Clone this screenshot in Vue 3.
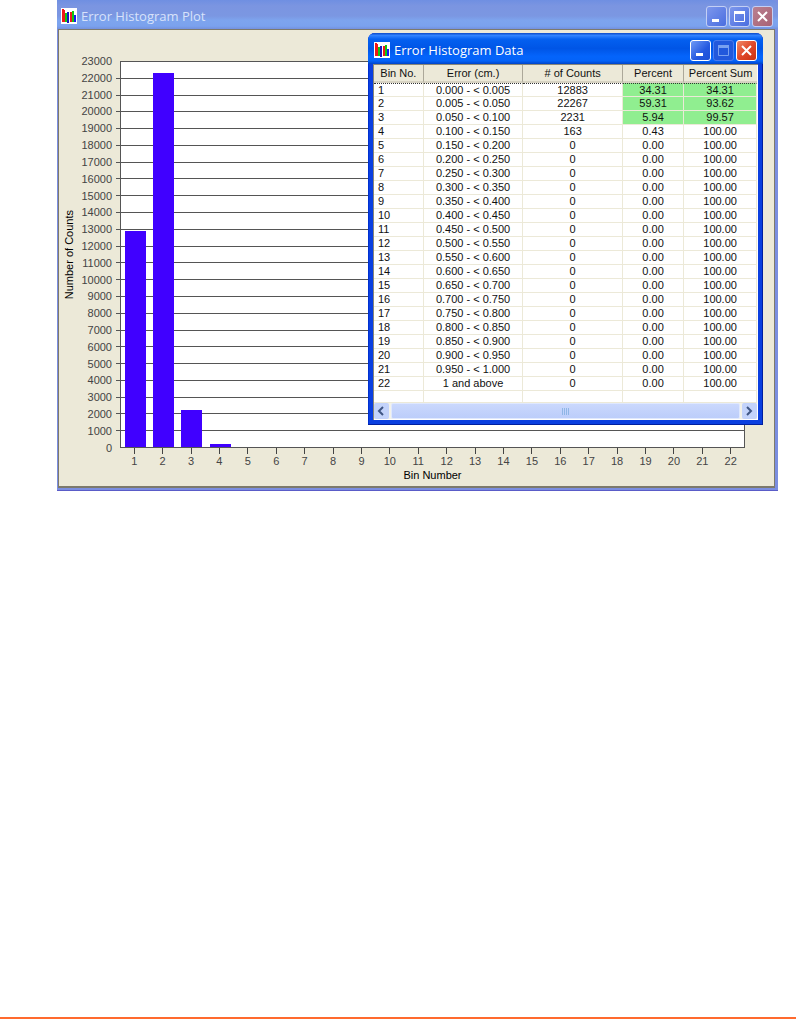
<script setup>
const step = 1000
const maxCount = 23000
const yLabels = Array.from({ length: 24 }, (_, i) => maxCount - i * step)
const ranges = [
  '0.000 - < 0.005', '0.005 - < 0.050', '0.050 - < 0.100', '0.100 - < 0.150',
  '0.150 - < 0.200', '0.200 - < 0.250', '0.250 - < 0.300', '0.300 - < 0.350',
  '0.350 - < 0.400', '0.400 - < 0.450', '0.450 - < 0.500', '0.500 - < 0.550',
  '0.550 - < 0.600', '0.600 - < 0.650', '0.650 - < 0.700', '0.700 - < 0.750',
  '0.750 - < 0.800', '0.800 - < 0.850', '0.850 - < 0.900', '0.900 - < 0.950',
  '0.950 - < 1.000', '1 and above',
]
const counts = [12883, 22267, 2231, 163]
const percents = ['34.31', '59.31', '5.94', '0.43']
const sums = ['34.31', '93.62', '99.57']
const rows = ranges.map((range, i) => ({
  bin: i + 1,
  range,
  count: counts[i] ?? 0,
  percent: percents[i] ?? '0.00',
  sum: sums[i] ?? '100.00',
  good: i < 3,
}))
const barHeight = (count) => ({ height: (count / maxCount) * 100 + '%' })
</script>

<template>
  <div class="page">
    <main class="desk">
      <section class="window plot-window" aria-label="Error Histogram Plot">
        <header class="titlebar">
          <svg class="app-icon" viewBox="0 0 16 16" aria-hidden="true">
            <rect width="16" height="16" fill="#fff" />
            <path d="M1 1h2v13H1zM3 2h1v12H3z" fill="#f01818" />
            <path d="M4 5h2v9H4z" fill="#10c810" />
            <path d="M6 4h2v11H6z" fill="#1818c0" />
            <path d="M9 4h2v10H9z" fill="#f01818" />
            <path d="M11 3h2v11h-2z" fill="#10c810" />
            <path d="M13 7h2v7h-2z" fill="#1818f0" />
          </svg>
          <h1>Error Histogram Plot</h1>
          <div class="controls">
            <button type="button" aria-label="Minimize"><svg viewBox="0 0 19 19"><path d="M5 13.5h7" stroke="#fff" stroke-width="3" /></svg></button>
            <button type="button" aria-label="Maximize"><svg viewBox="0 0 19 19"><path d="M4.5 5v9.500h10V4.500" fill="none" stroke="#fff" /><path d="M4 5.500h11" stroke="#fff" stroke-width="3" /></svg></button>
            <button type="button" class="close" aria-label="Close"><svg viewBox="0 0 19 19"><path d="M5 5l9 9M14 5l-9 9" stroke="#fff" stroke-width="2" /></svg></button>
          </div>
        </header>
        <div class="plot-body">
          <div class="y-title"><span>Number of Counts</span></div>
          <div class="y-axis">
            <span v-for="y in yLabels" :key="y">{{ y }}</span>
          </div>
          <div class="plot">
            <div class="grid"><i v-for="n in 23" :key="n"></i></div>
            <div class="bars">
              <div v-for="r in rows" :key="r.bin" class="slot">
                <div v-if="r.count" class="bar" :style="barHeight(r.count)"></div>
              </div>
            </div>
          </div>
          <div class="x-axis">
            <span v-for="r in rows" :key="r.bin">{{ r.bin }}</span>
          </div>
          <div class="x-title">Bin Number</div>
        </div>
      </section>

      <section class="window data-window" aria-label="Error Histogram Data">
        <header class="titlebar">
          <svg class="app-icon" viewBox="0 0 16 16" aria-hidden="true">
            <rect width="16" height="16" fill="#fff" />
            <path d="M1 1h2v13H1zM3 2h1v12H3z" fill="#f01818" />
            <path d="M4 5h2v9H4z" fill="#10c810" />
            <path d="M6 4h2v11H6z" fill="#1818c0" />
            <path d="M9 4h2v10H9z" fill="#f01818" />
            <path d="M11 3h2v11h-2z" fill="#10c810" />
            <path d="M13 7h2v7h-2z" fill="#1818f0" />
          </svg>
          <h2>Error Histogram Data</h2>
          <div class="controls">
            <button type="button" aria-label="Minimize"><svg viewBox="0 0 19 19"><path d="M5 13.5h7" stroke="#fff" stroke-width="3" /></svg></button>
            <button type="button" class="disabled" disabled aria-label="Maximize"><svg viewBox="0 0 19 19"><path d="M4.500 5v9.500h10V4.500" fill="none" stroke="#79a0f0" /><path d="M4 5.500h11" stroke="#79a0f0" stroke-width="3" /></svg></button>
            <button type="button" class="close" aria-label="Close"><svg viewBox="0 0 19 19"><path d="M5 5l9 9M14 5l-9 9" stroke="#fff" stroke-width="2" /></svg></button>
          </div>
        </header>
        <div class="list">
          <table>
            <colgroup>
              <col class="c1" /><col class="c2" /><col class="c3" /><col class="c4" /><col class="c5" />
            </colgroup>
            <thead>
              <tr><th>Bin No.</th><th>Error (cm.)</th><th># of Counts</th><th>Percent</th><th>Percent Sum</th></tr>
            </thead>
            <tbody>
              <tr v-for="r in rows" :key="r.bin">
                <td>{{ r.bin }}</td>
                <td>{{ r.range }}</td>
                <td>{{ r.count }}</td>
                <td :class="{ good: r.good }">{{ r.percent }}</td>
                <td :class="{ good: r.good }">{{ r.sum }}</td>
              </tr>
              <tr class="blank"><td></td><td></td><td></td><td></td><td></td></tr>
            </tbody>
          </table>
          <div class="scrollbar">
            <button type="button" aria-label="Scroll left"><svg viewBox="0 0 14 14"><path d="M9 3L5 7l4 4" fill="none" stroke="#3f5684" stroke-width="2" /></svg></button>
            <div class="thumb"><i></i><i></i><i></i><i></i></div>
            <button type="button" aria-label="Scroll right"><svg viewBox="0 0 14 14"><path d="M5 3l4 4-4 4" fill="none" stroke="#3f5684" stroke-width="2" /></svg></button>
          </div>
        </div>
      </section>
    </main>
    <footer class="rule"></footer>
  </div>
</template>

<style>
body {
  margin: 0;
  background: #fff;
}
</style>

<style scoped>
* {
  box-sizing: border-box;
}
.page {
  min-height: 100vh;
  display: flex;
  flex-direction: column;
  justify-content: space-between;
  font-family: "Liberation Sans", Arial, sans-serif;
  font-size: 11px;
  color: #222;
}
.desk {
  position: relative;
  margin: 0 19px 0 57px;
}
.rule {
  height: 2px;
  margin-right: 1px;
  background: #ff6a2e;
}
.titlebar {
  display: flex;
  align-items: center;
  gap: 4px;
}
.titlebar h1,
.titlebar h2 {
  flex: 1;
  margin: 0;
  font: 500 13px/16px "Open Sans", "Noto Sans", sans-serif;
  color: #d8e2fa;
}
.app-icon {
  width: 16px;
  height: 16px;
}
.controls {
  display: flex;
  gap: 2px;
}
.controls button {
  width: 21px;
  height: 21px;
  padding: 0;
  border: 1px solid #fff;
  border-radius: 3px;
  background: linear-gradient(135deg, #6f9af5, #2458e0 60%, #1c4fd6);
}
.controls svg {
  display: block;
  width: 19px;
  height: 19px;
}
.controls .close {
  background: linear-gradient(135deg, #f08a68, #e0482a 50%, #c93010);
}
.plot-window {
  background: #7b8ee0;
  border-bottom: 1px solid #5a5cc8;
  padding: 0 3px 2px 1px;
}
.plot-window .titlebar {
  height: 29px;
  margin: 0 -3px 0 -1px;
  padding: 3px 5px 0 4px;
  border-radius: 0 6px 0 0;
  background: linear-gradient(#6f8fe2, #7b95e1 20%, #7b97e2 55%, #7da4ee 70%, #7ba2ee 90%, #7390de);
}
.plot-window .controls button {
  border-color: #c3cff5;
  background: linear-gradient(135deg, #7d97ec, #4a6ee0);
}
.plot-window .controls .close {
  background: linear-gradient(135deg, #b98090, #a86274);
}
.plot-body {
  display: grid;
  grid-template: 387px 20px 16px / 20px 41px 1fr;
  padding: 31px 29px 2px 0;
  background: #ece9d8;
  border: 1px solid #7d7a6c;
  border-width: 1px 1px 2px 1px;
}
.y-title {
  display: flex;
  align-items: center;
  justify-content: center;
}
.y-title span {
  writing-mode: vertical-rl;
  transform: rotate(180deg);
  color: #000;
}
.y-axis {
  display: flex;
  flex-direction: column;
  justify-content: space-between;
  margin: -6px 0;
  padding-right: 8px;
  text-align: right;
  line-height: 12px;
  color: #444;
}
.plot {
  display: grid;
  background: #fff;
  border: 1px solid #555;
  border-width: 0 1px 1px;
}
.grid,
.bars {
  grid-area: 1 / 1;
  display: flex;
}
.grid {
  flex-direction: column;
  margin-left: -5px;
}
.grid i {
  flex: 1;
  border-top: 1px solid #555;
}
.grid i:first-child {
  margin-left: 5px;
}
.slot {
  flex: 1;
  display: flex;
  align-items: flex-end;
  justify-content: center;
}
.bar {
  width: 21px;
  background: #4000ff;
}
.x-axis {
  grid-column: 3;
  display: flex;
}
.x-axis span {
  flex: 1;
  text-align: center;
  color: #444;
  line-height: 14px;
}
.x-axis span::before {
  content: "";
  display: block;
  width: 1px;
  height: 6px;
  margin: 0 auto;
  background: #444;
}
.x-title {
  grid-column: 3;
  text-align: center;
  line-height: 14px;
  color: #000;
}
.data-window {
  position: absolute;
  top: 33px;
  right: 15px;
  width: 395px;
  padding: 0 5px 5px;
  border-radius: 7px 7px 0 0;
  background: #0a3fe0;
  box-shadow: inset -1px -1px #001fa0, inset 1px 0 #0030d0;
}
.data-window .titlebar {
  height: 31px;
  margin: 0 -5px;
  padding: 3px 6px 0;
  border-radius: 7px 7px 0 0;
  background: linear-gradient(#0a49c8, #2f82ff 8%, #0460f0 20%, #0055e6 50%, #0464fb 75%, #0463f8 90%, #0044c8);
}
.data-window h2 {
  color: #fff;
}
.data-window .disabled {
  border-color: #4a7cee;
  background: #2258dc;
}
.list {
  background: #fff;
  border: 1px solid #8a8778;
  border-width: 1px 0 0 1px;
  padding: 0 1px 1px 0;
}
table {
  width: 100%;
  table-layout: fixed;
  border-collapse: separate;
  border-spacing: 0;
  color: #111;
}
.c1 { width: 13%; }
.c2 { width: 26%; }
.c3 { width: 26%; }
.c4 { width: 16%; }
.c5 { width: 19%; }
th {
  height: 18px;
  padding: 0;
  font-weight: normal;
  line-height: 14px;
  background: #ece9d8;
  border-right: 1px solid #aca899;
  border-bottom: 2px solid #d6d2c2;
}
th:last-child {
  border-right: 0;
}
td {
  padding: 0;
  line-height: 13px;
  text-align: center;
  border-right: 1px solid #ece9d8;
  border-bottom: 1px solid #ece9d8;
}
td:first-child {
  text-align: left;
  padding-left: 4px;
}
tbody tr:first-child td {
  line-height: 12px;
  border-top: 1px dotted #333;
}
.blank td {
  height: 12px;
}
.good {
  background: #90ee90;
}
.scrollbar {
  display: flex;
  gap: 2px;
  height: 16px;
  background: #f3f2ea;
}
.scrollbar button {
  width: 15px;
  padding: 0;
  border: 0;
  border-radius: 2px;
  background: #c3d3fb;
}
.scrollbar svg {
  display: block;
  width: 14px;
  height: 14px;
}
.thumb {
  flex: 1;
  display: flex;
  align-items: center;
  justify-content: center;
  gap: 1px;
  border: 1px solid #dfe8fe;
  border-radius: 2px;
  background: linear-gradient(#cad8fd, #bccdfa);
}
.thumb i {
  width: 1px;
  height: 7px;
  background: #8fb6e6;
}
</style>
